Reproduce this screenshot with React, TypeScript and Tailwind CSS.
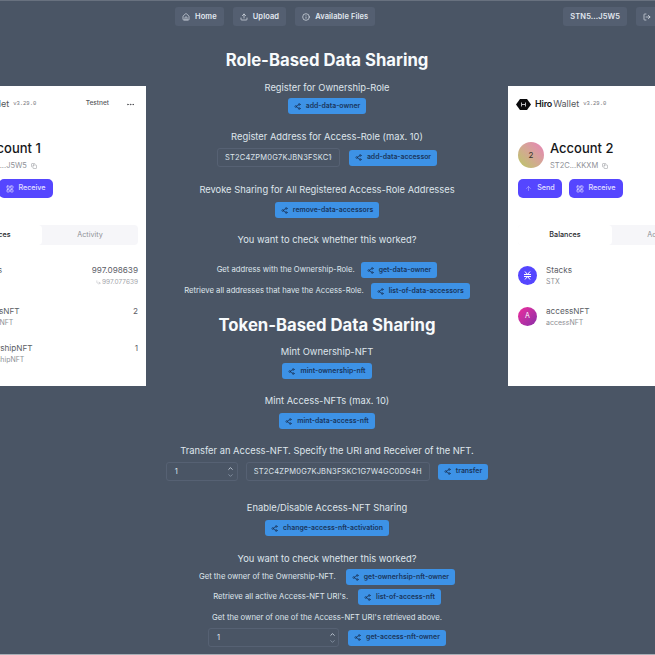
import React from 'react';
import { Copy, House, Info, LogOut, ArrowUp, LayoutGrid, Share2, Upload, Ellipsis, ChevronUp, ChevronDown, CornerDownRight } from 'lucide-react';

const NavButton = ({ icon, label }: { icon?: React.ReactNode; label: string }) => (
  <div className="flex h-[19px] items-center gap-[5px] rounded-[3px] bg-[#545f71] px-[7px] text-[7.500px] font-semibold tracking-[0.1px] whitespace-nowrap text-[#e2e8f0]">
    {icon}
    <span>{label}</span>
  </div>
);

const ActionButton = ({ label, className = '' }: { label: string; className?: string }) => (
  <div className={`flex h-[16px] shrink-0 items-center gap-[5px] rounded-[3px] bg-[#3d92e6] px-[6px] text-[6.900px] font-semibold whitespace-nowrap text-[#1a365d] ${className}`}>
    <Share2 size={7} strokeWidth={2.5} />
    <span>{label}</span>
  </div>
);

const Label = ({ children, className = '' }: { children: React.ReactNode; className?: string }) => (
  <p className={`text-[9.350px] leading-[14px] whitespace-nowrap text-[#dfe5ec] ${className}`}>{children}</p>
);

const Small = ({ children }: { children: React.ReactNode }) => (
  <p className="text-[7.700px] leading-[12px] whitespace-nowrap text-[#dfe5ec]">{children}</p>
);

const TextInput = ({ value, className = '' }: { value: string; className?: string }) => (
  <div className={`flex h-[19px] shrink-0 items-center rounded-[3px] border border-[#566173] px-[7px] text-[7.500px] tracking-[0.2px] whitespace-nowrap text-[#dfe5ec] ${className}`}>
    <div className="flex-1 overflow-hidden">{value}</div>
  </div>
);

const NumberInput = ({ className = '' }: { className?: string }) => (
  <div className={`flex h-[19px] shrink-0 items-center justify-between rounded-[3px] border border-[#566173] pl-[8px] text-[7.500px] text-[#dfe5ec] ${className}`}>
    <span>1</span>
    <div className="flex h-full w-[12px] flex-col items-center justify-center">
      <ChevronUp size={7} strokeWidth={3} className="text-[#cbd5e0]" />
      <ChevronDown size={7} strokeWidth={3} className="text-[#8793a5]" />
    </div>
  </div>
);

const TokenRow = ({ icon, name, sub, amount, extra, className = '' }: { icon: React.ReactNode; name: string; sub: string; amount: string; extra?: string; className?: string }) => (
  <div className={`flex items-start ${className}`}>
    <div className="mt-[2px] w-[28px] shrink-0">{icon}</div>
    <div className="flex-1">
      <p className="text-[8.200px] leading-[12px] text-[#5c5e66]">{name}</p>
      <p className="text-[7px] leading-[11px] text-[#8e9096]">{sub}</p>
    </div>
    <div className="text-right">
      <p className="text-[8.200px] leading-[12px] text-[#5c5e66]">{amount}</p>
      {extra && (
        <p className="flex items-center justify-end gap-[1px] text-[6.500px] leading-[12px] text-[#a3a5aa]">
          <CornerDownRight size={5} />
          {extra}
        </p>
      )}
    </div>
  </div>
);

const WalletCard = ({ num, address, showOwnership }: { num: string; address: string; showOwnership?: boolean }) => (
  <div className="h-[300px] w-[208px] shrink-0 bg-white pt-[10px] pr-[8px] pl-[10px] text-[#16171a]">
    <div className="flex h-[16px] items-center">
      <svg width="15" height="11" viewBox="0 0 15 11" className="mr-[4px] ml-[-2px]">
        <path d="M4 0h7l4 5.500L11 11H4L0 5.500z" fill="#0b0b0d" />
        <path d="M5.500 3.500v4M9.500 3.500v4M5.500 5.500h4" stroke="#bdbdc1" strokeWidth="1" fill="none" />
      </svg>
      <span className="text-[9px] font-semibold tracking-[-0.2px]">Hiro</span>
      <span className="ml-[1px] text-[9px] text-[#55565b]">Wallet</span>
      <span className="ml-[4px] font-['Liberation_Mono',monospace] text-[5.500px] text-[#75767b]">v3.29.0</span>
      <span className="ml-auto text-[6.500px] font-medium text-[#55565b]">Testnet</span>
      <Ellipsis size={9} className="mr-[3px] ml-[17px] text-[#44454a]" />
    </div>
    <div className="mt-[29px] flex items-start">
      <div className="mt-[1px] flex h-[26px] w-[26px] items-center justify-center rounded-full bg-gradient-to-tr from-[#b8c860] to-[#e880b8] text-[8px] text-[#33302a]">{num}</div>
      <div className="ml-[6px]">
        <p className="text-[13px] leading-[14px] font-medium">Account {num}</p>
        <p className="mt-[6px] flex items-center gap-[4px] text-[7.500px] leading-[10px] text-[#8e9096]">
          {address}
          <Copy size={6} />
        </p>
      </div>
    </div>
    <div className="mt-[8px] flex gap-[7px]">
      <div className="flex h-[19px] w-[44px] items-center justify-center gap-[5px] rounded-[5px] bg-[#5546ff] text-[7.200px] font-medium text-[#e4e1ff]">
        <ArrowUp size={7} className="text-[#b9b2ff]" />
        Send
      </div>
      <div className="flex h-[19px] w-[54px] items-center justify-center gap-[4px] rounded-[5px] bg-[#5546ff] text-[7.200px] font-medium text-[#e4e1ff]">
        <LayoutGrid size={8} />
        Receive
      </div>
    </div>
    <div className="mt-[27px] flex h-[20px] rounded-[4px] bg-[#f6f6f9] text-[7.200px]">
      <div className="flex w-[94px] items-center justify-center rounded-[4px] bg-white font-medium text-[#24252a]">Balances</div>
      <div className="flex flex-1 items-center justify-center text-[#8e9096]">Activity</div>
    </div>
    <TokenRow
      className="mt-[19px]"
      name="Stacks"
      sub="STX"
      amount="997.098639"
      extra="997.077639"
      icon={
        <div className="flex h-[19px] w-[19px] items-center justify-center rounded-full bg-[#5546ff]">
          <svg width="9" height="9" viewBox="0 0 9 9" fill="none" stroke="#fff" strokeWidth="1">
            <path d="M1 3.500h7M1 5.500h7M2 0.500l2.500 3 2.500-3M2 8.500l2.500-3 2.500 3" />
          </svg>
        </div>
      }
    />
    <TokenRow
      className="mt-[17px]"
      name="accessNFT"
      sub="accessNFT"
      amount="2"
      icon={<div className="flex h-[19px] w-[19px] items-center justify-center rounded-full bg-gradient-to-br from-[#f0289b] to-[#8a2aa8] text-[7px] text-white">A</div>}
    />
    {showOwnership && (
      <TokenRow
        className="mt-[14px]"
        name="ownershipNFT"
        sub="ownershipNFT"
        amount="1"
        icon={<div className="flex h-[19px] w-[19px] items-center justify-center rounded-full bg-gradient-to-br from-[#3bc48e] to-[#1d6fb8] text-[7px] text-white">O</div>}
      />
    )}
  </div>
);

export default function App() {
  return (
    <div className="h-[655px] w-[655px] overflow-hidden border-t border-b border-t-[#68717f] border-b-[#a9aeb6] bg-[#4a5565] font-['Inter',sans-serif]">
      <div className="ml-[175px] flex w-[514px] justify-between pt-[6px]">
        <div className="flex gap-[9px]">
          <NavButton icon={<House size={8} />} label="Home" />
          <NavButton icon={<Upload size={8} />} label="Upload" />
          <NavButton icon={<Info size={8} />} label="Available Files" />
        </div>
        <div className="flex gap-[9px]">
          <NavButton label="STN5...J5W5" />
          <NavButton icon={<LogOut size={8} />} label="Logout" />
        </div>
      </div>

      <div className="flex">
        <div className="flex w-[146px] shrink-0 justify-end overflow-hidden pt-[60px]">
          <WalletCard num="1" address="STN5...J5W5" showOwnership />
        </div>

        <div className="flex w-[362px] shrink-0 flex-col items-center">
          <h1 className="mt-[22px] text-[16.700px] leading-[24px] font-bold whitespace-nowrap text-[#f7fafc]">Role-Based Data Sharing</h1>
          <Label className="mt-[9px]">Register for Ownership-Role</Label>
          <ActionButton label="add-data-owner" className="mt-[3px]" />
          <Label className="mt-[16px]">Register Address for Access-Role (max. 10)</Label>
          <div className="mt-[4px] flex items-center gap-[9px]">
            <TextInput value="ST2C4ZPM0G7KJBN3FSKC1G7W4GC0DG4H" className="w-[123px]" />
            <ActionButton label="add-data-accessor" />
          </div>
          <Label className="mt-[16px]">Revoke Sharing for All Registered Access-Role Addresses</Label>
          <ActionButton label="remove-data-accessors" className="mt-[5px]" />
          <Label className="mt-[15px]">You want to check whether this worked?</Label>
          <div className="mt-[15px] flex items-center gap-[6px]">
            <Small>Get address with the Ownership-Role.</Small>
            <ActionButton label="get-data-owner" />
          </div>
          <div className="mt-[5px] flex items-center gap-[7px]">
            <Small>Retrieve all addresses that have the Access-Role.</Small>
            <ActionButton label="list-of-data-accessors" />
          </div>

          <h1 className="mt-[14px] text-[16.700px] leading-[24px] font-bold whitespace-nowrap text-[#f7fafc]">Token-Based Data Sharing</h1>
          <Label className="mt-[8px]">Mint Ownership-NFT</Label>
          <ActionButton label="mint-ownership-nft" className="mt-[4px]" />
          <Label className="mt-[15px]">Mint Access-NFTs (max. 10)</Label>
          <ActionButton label="mint-data-access-nft" className="mt-[5px]" />
          <Label className="mt-[15px]">Transfer an Access-NFT. Specify the URI and Receiver of the NFT.</Label>
          <div className="mt-[4px] flex items-center gap-[8px]">
            <NumberInput className="w-[72px]" />
            <TextInput value="ST2C4ZPM0G7KJBN3FSKC1G7W4GC0DG4H:" className="w-[184px]" />
            <ActionButton label="transfer" />
          </div>
          <Label className="mt-[20px]">Enable/Disable Access-NFT Sharing</Label>
          <ActionButton label="change-access-nft-activation" className="mt-[5px]" />
          <Label className="mt-[16px]">You want to check whether this worked?</Label>
          <div className="mt-[3px] flex items-center gap-[10px]">
            <Small>Get the owner of the Ownership-NFT.</Small>
            <ActionButton label="get-ownerhsip-nft-owner" />
          </div>
          <div className="mt-[4px] flex items-center gap-[10px]">
            <Small>Retrieve all active Access-NFT URI's.</Small>
            <ActionButton label="list-of-access-nft" />
          </div>
          <div className="mt-[7px]">
            <Small>Get the owner of one of the Access-NFT URI's retrieved above.</Small>
          </div>
          <div className="mt-[4px] flex items-center gap-[9px]">
            <NumberInput className="w-[131px]" />
            <ActionButton label="get-access-nft-owner" />
          </div>
        </div>

        <div className="flex w-[147px] shrink-0 overflow-hidden pt-[60px]">
          <WalletCard num="2" address="ST2C...KKXM" />
        </div>
      </div>
    </div>
  );
}
